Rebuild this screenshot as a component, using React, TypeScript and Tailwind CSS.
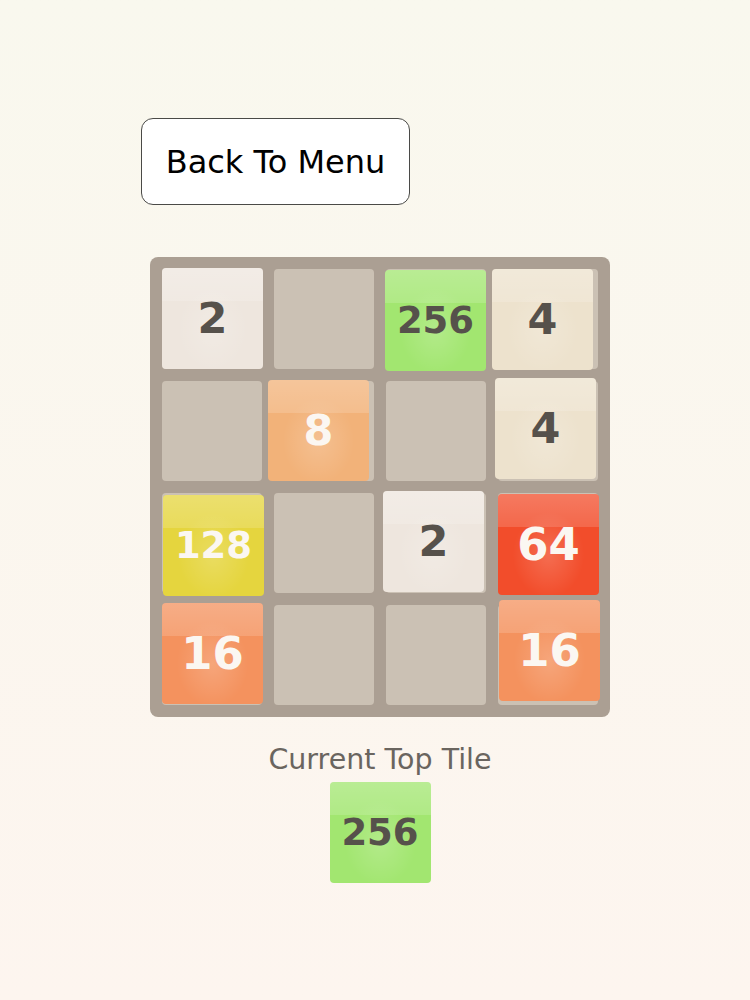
import React from "react";

type Cell = {
  value: number;
  shift: string;
};

const tileStyles: Record<number, string> = {
  2: "bg-[#eee6de] text-[#56514b]",
  4: "bg-[#ede2cd] text-[#56514b]",
  8: "bg-[#f2b279] text-[#fbf7f2]",
  16: "bg-[#f4925e] text-[#fbf7f2]",
  64: "bg-[#f24d2b] text-[#fbf7f2]",
  128: "bg-[#e5d53e] text-[#fbf7f2]",
  256: "bg-[#a2e670] text-[#56514b]",
};

const fontSize = (v: number) => {
  if (v >= 100) return "text-[37px]";
  if (v >= 10) return "text-[45px]";
  return "text-[43px]";
};

const board: (Cell | null)[] = [
  { value: 2, shift: "translate-y-[-1px]" },
  null,
  { value: 256, shift: "translate-x-[-1px] translate-y-[1px]" },
  { value: 4, shift: "translate-x-[-6px]" },

  null,
  { value: 8, shift: "translate-x-[-6px] translate-y-[-1px]" },
  null,
  { value: 4, shift: "translate-x-[-3px] translate-y-[-3px]" },

  { value: 128, shift: "translate-x-[1px] translate-y-[2px]" },
  null,
  { value: 2, shift: "translate-x-[-3px] translate-y-[-2px]" },
  { value: 64, shift: "translate-y-[1px]" },

  { value: 16, shift: "translate-y-[-2px]" },
  null,
  null,
  { value: 16, shift: "translate-x-[1px] translate-y-[-5px]" },
];

function Tile({ value, className = "" }: { value: number; className?: string }) {
  return (
    <div
      className={`relative w-[101px] h-[101px] rounded-[4px] overflow-hidden flex items-center justify-center font-bold ${tileStyles[value]} ${className}`}
    >
      {/* glossy band + centre glow */}
      <div className="absolute inset-x-0 top-0 h-[33%] bg-gradient-to-b from-white/25 to-white/15" />
      <div className="absolute inset-0 bg-[radial-gradient(ellipse_at_50%_60%,rgba(255,255,255,0.18),rgba(255,255,255,0)_50%)]" />
      <span className={`relative leading-none ${fontSize(value)}`}>{value}</span>
    </div>
  );
}

export default function App() {
  return (
    <div
      className="min-h-screen w-full bg-gradient-to-b from-[#f9f8ee] to-[#fdf5ef] pt-[118px]"
      style={{ fontFamily: '"DejaVu Sans", "Liberation Sans", sans-serif' }}
    >
      <button className="ml-[141px] w-[269px] h-[87px] rounded-xl border-[1.5px] border-[#4a4a47] bg-white text-black text-[32px] flex items-center justify-center">
        Back To Menu
      </button>

      <div className="ml-[150px] mt-[52px] w-[460px] flex flex-col items-center">
        <div className="w-[460px] h-[460px] rounded-[8px] bg-[#ab9f93] p-[12px] grid grid-cols-4 gap-[12px]">
          {board.map((cell, i) => (
            <div key={i} className="w-[100px] h-[100px] rounded-[4px] bg-[#cbc1b4]">
              {cell && <Tile value={cell.value} className={cell.shift} />}
            </div>
          ))}
        </div>

        <div className="mt-[26px] text-[28.5px] leading-[34px] text-[#6a655f]">Current Top Tile</div>
        <Tile value={256} className="mt-[5px] w-[100px] h-[100px]" />
      </div>
    </div>
  );
}
